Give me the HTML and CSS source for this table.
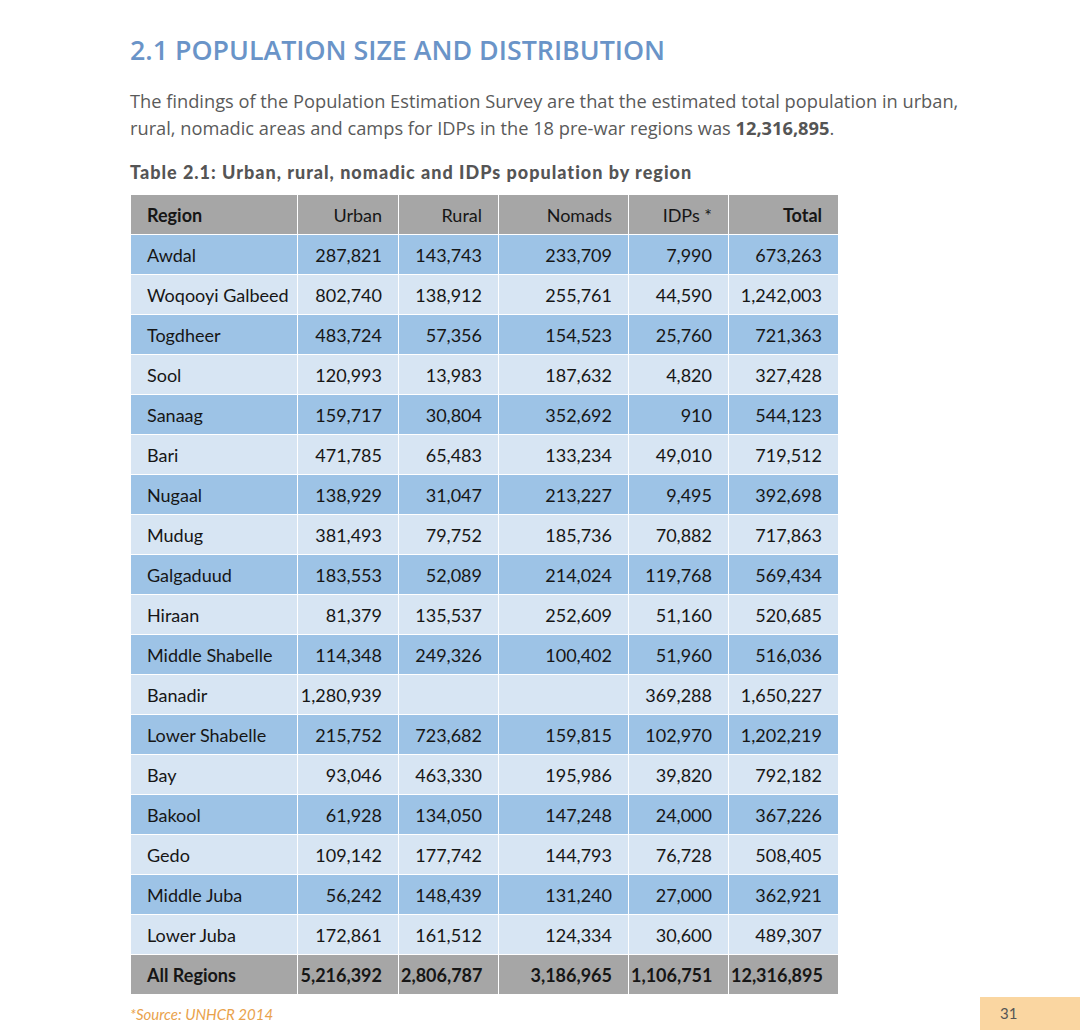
FILE: index.html
```html
<!DOCTYPE html>
<html lang="en">
<head>
<meta charset="utf-8">
<title>2.1 Population Size and Distribution</title>
<link rel="stylesheet" href="styles.css">
</head>
<body>
<div class="page">
  <h1 class="title">2.1 POPULATION SIZE AND DISTRIBUTION</h1>
  <p class="lead">The findings of the Population Estimation Survey are that the estimated total population in urban, rural, nomadic areas and camps for IDPs in the 18 pre-war regions was <strong>12,316,895</strong>.</p>
  <p class="caption">Table 2.1: Urban, rural, nomadic and IDPs population by region</p>
  <table class="pop">
    <colgroup>
      <col class="c-region"><col class="c-urban"><col class="c-rural"><col class="c-nomads"><col class="c-idps"><col class="c-total">
    </colgroup>
    <thead>
      <tr class="head"><th class="l">Region</th><th>Urban</th><th>Rural</th><th>Nomads</th><th>IDPs *</th><th class="b">Total</th></tr>
    </thead>
    <tbody>
      <tr class="dk"><td class="l">Awdal</td><td>287,821</td><td>143,743</td><td>233,709</td><td>7,990</td><td>673,263</td></tr>
      <tr class="lt"><td class="l">Woqooyi Galbeed</td><td>802,740</td><td>138,912</td><td>255,761</td><td>44,590</td><td>1,242,003</td></tr>
      <tr class="dk"><td class="l">Togdheer</td><td>483,724</td><td>57,356</td><td>154,523</td><td>25,760</td><td>721,363</td></tr>
      <tr class="lt"><td class="l">Sool</td><td>120,993</td><td>13,983</td><td>187,632</td><td>4,820</td><td>327,428</td></tr>
      <tr class="dk"><td class="l">Sanaag</td><td>159,717</td><td>30,804</td><td>352,692</td><td>910</td><td>544,123</td></tr>
      <tr class="lt"><td class="l">Bari</td><td>471,785</td><td>65,483</td><td>133,234</td><td>49,010</td><td>719,512</td></tr>
      <tr class="dk"><td class="l">Nugaal</td><td>138,929</td><td>31,047</td><td>213,227</td><td>9,495</td><td>392,698</td></tr>
      <tr class="lt"><td class="l">Mudug</td><td>381,493</td><td>79,752</td><td>185,736</td><td>70,882</td><td>717,863</td></tr>
      <tr class="dk"><td class="l">Galgaduud</td><td>183,553</td><td>52,089</td><td>214,024</td><td>119,768</td><td>569,434</td></tr>
      <tr class="lt"><td class="l">Hiraan</td><td>81,379</td><td>135,537</td><td>252,609</td><td>51,160</td><td>520,685</td></tr>
      <tr class="dk"><td class="l">Middle Shabelle</td><td>114,348</td><td>249,326</td><td>100,402</td><td>51,960</td><td>516,036</td></tr>
      <tr class="lt"><td class="l">Banadir</td><td>1,280,939</td><td></td><td></td><td>369,288</td><td>1,650,227</td></tr>
      <tr class="dk"><td class="l">Lower Shabelle</td><td>215,752</td><td>723,682</td><td>159,815</td><td>102,970</td><td>1,202,219</td></tr>
      <tr class="lt"><td class="l">Bay</td><td>93,046</td><td>463,330</td><td>195,986</td><td>39,820</td><td>792,182</td></tr>
      <tr class="dk"><td class="l">Bakool</td><td>61,928</td><td>134,050</td><td>147,248</td><td>24,000</td><td>367,226</td></tr>
      <tr class="lt"><td class="l">Gedo</td><td>109,142</td><td>177,742</td><td>144,793</td><td>76,728</td><td>508,405</td></tr>
      <tr class="dk"><td class="l">Middle Juba</td><td>56,242</td><td>148,439</td><td>131,240</td><td>27,000</td><td>362,921</td></tr>
      <tr class="lt"><td class="l">Lower Juba</td><td>172,861</td><td>161,512</td><td>124,334</td><td>30,600</td><td>489,307</td></tr>
    </tbody>
    <tfoot>
      <tr class="foot"><td class="l">All Regions</td><td>5,216,392</td><td>2,806,787</td><td>3,186,965</td><td>1,106,751</td><td>12,316,895</td></tr>
    </tfoot>
  </table>
  <div class="footer">
    <span class="source">*Source: UNHCR 2014</span>
    <span class="pageno">31</span>
  </div>
</div>
</body>
</html>
```

FILE: styles.css
```css
html, body {
  margin: 0;
  padding: 0;
  background: #ffffff;
}
body {
  width: 1080px;
  height: 1031px;
  overflow: hidden;
}
.page {
  padding: 30px 0 0 130px;
}
.title {
  margin: 0;
  font-family: "Open Sans", sans-serif;
  font-weight: 600;
  font-size: 26.8px;
  line-height: 40px;
  color: #6a94c8;
}
.lead {
  margin: 17px 0 0 0;
  width: 840px;
  font-family: "Open Sans", sans-serif;
  font-size: 18.25px;
  line-height: 27px;
  color: #5a5a5a;
}
.lead strong {
  font-weight: 700;
  color: #555555;
}
.caption {
  margin: 19px 0 0 0;
  font-family: "Lato", sans-serif;
  font-weight: 900;
  font-size: 18px;
  line-height: 24px;
  letter-spacing: 1px;
  color: #555555;
}
.pop {
  margin-top: 10px;
  border-collapse: collapse;
  table-layout: fixed;
  width: 708px;
  font-family: "Lato", sans-serif;
  font-size: 18px;
  color: #161616;
}
.c-region { width: 167px; }
.c-urban { width: 101px; }
.c-rural { width: 100px; }
.c-nomads { width: 130px; }
.c-idps { width: 100px; }
.c-total { width: 110px; }
.pop th, .pop td {
  height: 39px;
  padding: 0 16px 0 2px;
  text-align: right;
  border: 1px solid #ffffff;
  font-weight: 400;
  white-space: nowrap;
}
.pop .l {
  text-align: left;
  padding-left: 16px;
  padding-right: 2px;
}
.pop .b {
  font-weight: 700;
}
.head th {
  background: #a6a6a6;
}
.head th.l {
  font-weight: 700;
}
.dk td {
  background: #9dc3e6;
}
.lt td {
  background: #d7e5f3;
}
.foot td {
  background: #a6a6a6;
  font-weight: 700;
}
.footer {
  display: flex;
  justify-content: space-between;
  align-items: center;
  margin-top: 2px;
}
.source {
  font-family: "Lato", sans-serif;
  font-style: italic;
  font-size: 15px;
  color: #e9a24c;
}
.pageno {
  width: 80px;
  height: 33px;
  padding-left: 20px;
  background: #fad6a1;
  font-family: "Lato", sans-serif;
  font-size: 15px;
  line-height: 33px;
  color: #555555;
}
```
